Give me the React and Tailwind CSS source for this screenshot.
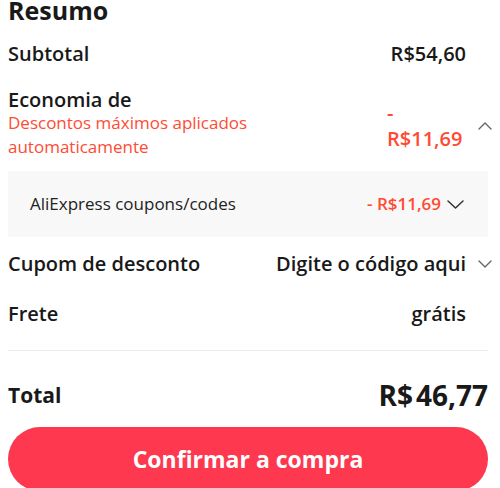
import React from "react";

const Chevron = ({ up = false, className = "", color = "#666", w = 14, h = 8, sw = 1.4 }) => (
  <svg width={w} height={h} viewBox={`0 0 ${w} ${h}`} className={className} fill="none">
    <polyline
      points={up ? `1,${h - 1} ${w / 2},1 ${w - 1},${h - 1}` : `1,1 ${w / 2},${h - 1} ${w - 1},1`}
      stroke={color}
      strokeWidth={sw}
      strokeLinecap="round"
      strokeLinejoin="round"
    />
  </svg>
);

export default function App() {
  return (
    <div
      className="w-[500px] h-[488px] overflow-hidden bg-white pl-2 pr-3 text-[#191919]"
      style={{ fontFamily: '"Open Sans", "Noto Sans", sans-serif' }}
    >
      <div className="-mt-[2px] h-[24px] text-[25px] leading-[24px] font-bold">Resumo</div>

      <div className="mt-[12px] mr-[-8px] flex h-[40px] items-center text-[20px] font-semibold">
        <div className="flex-1 leading-[28px]">Subtotal</div>
        <div className="leading-[28px]">R$54,60</div>
        <div className="w-[30px]"></div>
      </div>

      <div className="mr-[-8px] flex h-[97px] items-center">
        <div className="flex-1 pt-[2px]">
          <div className="text-[20px] leading-[22px] font-semibold">Economia de</div>
          <div className="text-[17px] leading-[24px] text-[#ff4b33]">
            Descontos máximos aplicados
            <br />
            automaticamente
          </div>
        </div>
        <div className="w-[79px] pt-[6px] text-[20px] leading-[26px] font-semibold text-[#ff4b33]">
          <div>-</div>
          <div>R$11,69</div>
        </div>
        <div className="flex w-[30px] items-center pl-[12px] pt-[6px]">
          <Chevron up />
        </div>
      </div>

      <div className="flex h-[66px] items-center bg-[#f8f8f8] pl-[22px] pr-[24px]">
        <div className="flex-1 text-[17px] font-medium leading-[24px] text-[#222]">AliExpress coupons/codes</div>
        <div className="text-[17px] font-semibold leading-[24px] text-[#ff4b33]">- R$11,69</div>
        <Chevron className="ml-[6px]" color="#333" w={17} h={9} sw={1.5} />
      </div>

      <div className="mr-[-8px] flex h-[53px] items-center text-[20px] font-semibold">
        <div className="flex-1 leading-[28px]">Cupom de desconto</div>
        <div className="leading-[28px]">Digite o código aqui</div>
        <div className="flex w-[30px] items-center pl-[12px]">
          <Chevron />
        </div>
      </div>

      <div className="mr-[-8px] flex h-[46px] items-center pt-[2px] text-[20px] font-semibold">
        <div className="flex-1 leading-[28px]">Frete</div>
        <div className="leading-[28px]">grátis</div>
        <div className="w-[30px]"></div>
      </div>

      <div className="mt-[14px] h-px bg-[#ececec]"></div>

      <div className="mt-[27px] flex h-[34px] items-center">
        <div className="flex-1 text-[21px] font-bold leading-[34px]">Total</div>
        <div className="flex text-[28px] font-bold leading-[34px]">
          <span>R$</span>
          <span className="ml-[3px]">46,77</span>
        </div>
      </div>

      <button className="mt-[15px] flex h-[64px] w-full items-center justify-center rounded-full bg-[#fd384f] text-[23px] font-bold text-white">
        Confirmar a compra
      </button>
    </div>
  );
}
